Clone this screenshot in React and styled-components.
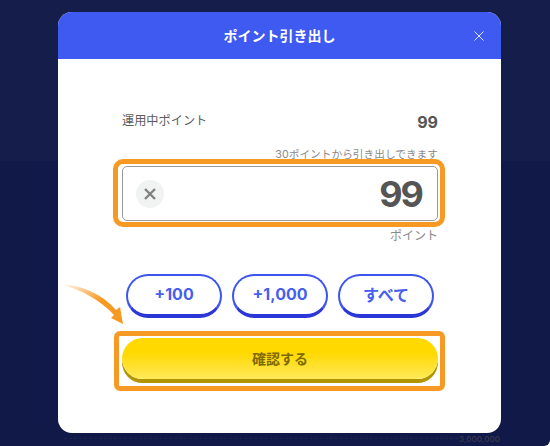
import React from 'react';
import styled, { createGlobalStyle } from 'styled-components';

const GlobalStyle = createGlobalStyle`
  html, body {
    margin: 0;
    padding: 0;
    background: #fff;
  }

  body {
    font-family: "Inter", "Noto Sans CJK JP", sans-serif;
  }
`;

const Screen = styled.div`
  position: relative;
  width: 550px;
  height: 446px;
  overflow: hidden;
  box-sizing: border-box;
  padding: 12px 0 0 58px;
  border-radius: 0 0 6px 0;
  background: linear-gradient(#151d4b 0, #151d4b 161px, #111948 161px);
`;

const FaintValue = styled.span`
  position: absolute;
  right: 50px;
  bottom: 2px;
  font-size: 8px;
  font-weight: 600;
  color: #33364f;
`;

const FaintRule = styled.div`
  position: absolute;
  left: 64px;
  right: 92px;
  bottom: 7px;
  border-top: 1px dashed #1d2450;
`;

const Modal = styled.div`
  position: relative;
  width: 443px;
  height: 421px;
  background: #fff;
  border-radius: 14px;
  overflow: hidden;
`;

const Header = styled.header`
  position: relative;
  height: 47px;
  padding-bottom: 2px;
  box-sizing: border-box;
  background: #3f5af0;
  color: #fff;
  display: flex;
  align-items: center;
  justify-content: center;
  font-size: 14px;
  font-weight: 700;
`;

const CloseButton = styled.svg`
  position: absolute;
  right: 17px;
  top: 19px;
  width: 10px;
  height: 10px;
`;

const Body = styled.div`
  display: flex;
  flex-direction: column;
  padding: 52px 63px 0 64px;
`;

const BalanceRow = styled.div`
  display: flex;
  justify-content: space-between;
  align-items: flex-start;
  height: 20px;
  color: #5c5c5c;
`;

const BalanceLabel = styled.span`
  font-size: 12.2px;
  line-height: 20px;
`;

const BalanceValue = styled.span`
  font-size: 16px;
  line-height: 22px;
  font-weight: 700;
  color: #555;
`;

const Hint = styled.div`
  margin-top: 15px;
  height: 17px;
  line-height: 17px;
  text-align: right;
  font-size: 10.7px;
  color: #8a8a8a;
`;

const InputField = styled.div`
  position: relative;
  height: 55px;
  margin-top: 3px;
  box-sizing: border-box;
  padding: 0 15px 0 13px;
  display: flex;
  align-items: center;
  justify-content: space-between;
  border: 1px solid #9a9a9a;
  border-radius: 5px;
`;

const Highlight = styled.div`
  position: absolute;
  inset: ${(props) => props.$inset};
  border: 5px solid #f79a24;
  border-radius: ${(props) => props.$radius};
  pointer-events: none;
`;

const ClearButton = styled.div`
  width: 28px;
  height: 28px;
  border-radius: 50%;
  background: #f1f2f2;
  display: flex;
  align-items: center;
  justify-content: center;
`;

const Amount = styled.span`
  font-size: 36px;
  font-weight: 700;
  letter-spacing: -2px;
  color: #555;
`;

const Unit = styled.div`
  margin-top: 6px;
  height: 18px;
  line-height: 18px;
  text-align: right;
  font-size: 12px;
  color: #8a8a8a;
`;

const Chips = styled.div`
  display: flex;
  justify-content: center;
  gap: 10px;
  margin-top: 29px;
`;

const Chip = styled.button`
  width: 96px;
  height: 44px;
  box-sizing: border-box;
  padding: 0 0 2px;
  background: #fff;
  border: 2px solid #3b55ee;
  border-bottom-width: 4px;
  border-bottom-color: #2a36d6;
  border-radius: 22px;
  color: #4560ee;
  font-family: inherit;
  font-size: 16px;
  font-weight: 700;
`;

const ConfirmWrap = styled.div`
  position: relative;
  margin-top: 20px;
`;

const ConfirmButton = styled.button`
  display: block;
  width: 316px;
  height: 41px;
  padding: 0 0 2px;
  border: 0;
  border-radius: 21px;
  background: linear-gradient(#ffd900 0, #ffd900 35%, #ffe95a 100%);
  box-shadow: 0 4px 0 #b09500;
  color: #7d6a00;
  font-family: inherit;
  font-size: 14px;
  font-weight: 700;
`;

const Arrow = styled.svg`
  position: absolute;
  left: 2px;
  top: 272px;
  width: 66px;
  height: 42px;
`;

const App = () => (
  <>
    <GlobalStyle />
    <Screen>
      <FaintRule />
      <FaintValue>3,000,000</FaintValue>
      <Modal>
        <Header>
          ポイント引き出し
          <CloseButton viewBox="0 0 10 10">
            <path d="M.5.5l9 9M9.5.5l-9 9" stroke="#dfe4ff" strokeWidth="1" fill="none" />
          </CloseButton>
        </Header>
        <Body>
          <BalanceRow>
            <BalanceLabel>運用中ポイント</BalanceLabel>
            <BalanceValue>99</BalanceValue>
          </BalanceRow>
          <Hint>30ポイントから引き出しできます</Hint>
          <InputField>
            <ClearButton>
              <svg width="14" height="14" viewBox="0 0 14 14">
                <path d="M2 2l10 10M12 2L2 12" stroke="#808080" strokeWidth="2.4" fill="none" />
              </svg>
            </ClearButton>
            <Amount>99</Amount>
            <Highlight $inset="-8px -8px -7px -10px" $radius="10px" />
          </InputField>
          <Unit>ポイント</Unit>
          <Chips>
            <Chip>+100</Chip>
            <Chip>+1,000</Chip>
            <Chip>すべて</Chip>
          </Chips>
          <ConfirmWrap>
            <ConfirmButton>確認する</ConfirmButton>
            <Highlight $inset="-7px -7px -12px -8px" $radius="6px" />
          </ConfirmWrap>
        </Body>
        <Arrow viewBox="0 0 66 42">
          <defs>
            <linearGradient id="arrowFade" x1="0" y1="0" x2="1" y2="0.6">
              <stop offset="0" stopColor="#f79a24" stopOpacity="0" />
              <stop offset="0.65" stopColor="#f79a24" />
            </linearGradient>
          </defs>
          <path d="M0 0 C22 1 42 10 56 26 L60 23 L63 40 L51 34 L54 31 C40 16 22 6 0 0 Z" fill="url(#arrowFade)" />
        </Arrow>
      </Modal>
    </Screen>
  </>
);

export default App;
